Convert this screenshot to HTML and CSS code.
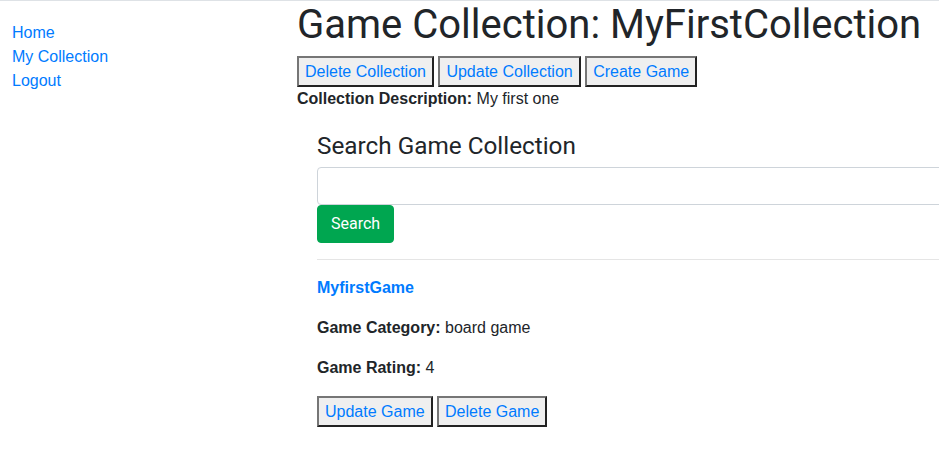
FILE: index.html
```html
<!DOCTYPE html>
<html lang="en">
<head>
<meta charset="utf-8">
<title>Game Collection</title>
<link rel="stylesheet" href="styles.css">
</head>
<body>
<div class="layout">
  <nav class="sidebar">
    <a href="#">Home</a>
    <a href="#">My Collection</a>
    <a href="#">Logout</a>
  </nav>
  <main class="content">
    <h1 class="title">Game Collection: MyFirstCollection</h1>
    <div class="actions">
      <button class="plain-btn">Delete Collection</button>
      <button class="plain-btn">Update Collection</button>
      <button class="plain-btn">Create Game</button>
    </div>
    <div class="desc"><b>Collection Description:</b> My first one</div>
    <section class="search">
      <h4 class="search-title">Search Game Collection</h4>
      <input class="search-input" type="text">
      <button class="search-btn">Search</button>
      <hr class="divider">
      <div class="game">
        <p><a href="#" class="game-name">MyfirstGame</a></p>
        <p><b>Game Category:</b> board game</p>
        <p><b>Game Rating:</b> 4</p>
        <div class="game-actions">
          <button class="plain-btn">Update Game</button>
          <button class="plain-btn">Delete Game</button>
        </div>
      </div>
    </section>
  </main>
</div>
</body>
</html>
```

FILE: styles.css
```css
html {
  overflow-x: hidden;
}
body {
  margin: 0;
  border-top: 1px solid #dee2e6;
  font-family: "Liberation Sans", Arial, sans-serif;
  font-size: 16px;
  line-height: 24px;
  color: #212529;
  background: #fff;
}
.layout {
  display: flex;
}
.sidebar {
  flex: 0 0 285px;
  padding: 20px 0 0 12px;
  display: flex;
  flex-direction: column;
}
.sidebar a,
.game-name {
  color: #007bff;
  text-decoration: none;
}
.game-name {
  font-weight: bold;
}
.content {
  flex: 0 0 700px;
}
.title {
  font-family: Roboto, sans-serif;
  font-weight: 400;
  font-size: 40px;
  line-height: 48px;
  margin: 0 0 7px;
  white-space: nowrap;
}
.plain-btn {
  font-family: "Liberation Sans", Arial, sans-serif;
  font-size: 16px;
  line-height: 24px;
  color: #007bff;
  background: #efefef;
  padding: 2px 6px 1px;
  border-width: 2px;
  border-style: solid;
  border-color: #767676 #222 #222 #767676;
  margin: 0;
}
.actions {
  height: 31px;
}
.search {
  padding: 20px 0 0 20px;
}
.search-title {
  font-family: Roboto, sans-serif;
  font-weight: 400;
  font-size: 24.3px;
  line-height: 29px;
  margin: 0 0 7px;
}
.search-input {
  display: block;
  box-sizing: border-box;
  width: 700px;
  height: 38px;
  border: 1px solid #ced4da;
  border-radius: 4px;
  margin: 0;
}
.search-btn {
  display: block;
  font-family: Roboto, sans-serif;
  font-size: 16px;
  line-height: 24px;
  color: #fff;
  background: #00a650;
  border: 1px solid #00a650;
  border-radius: 4px;
  padding: 6px 13px;
  margin: 0;
}
.divider {
  border: 0;
  border-top: 1px solid #e5e5e5;
  margin: 16px 0;
  width: 700px;
}
.game p {
  margin: 0 0 16px;
}
```
